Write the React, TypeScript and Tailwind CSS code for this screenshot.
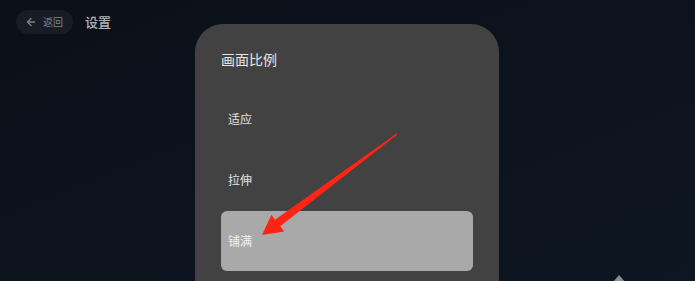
import React from "react";

const options = ["适应", "拉伸", "铺满"];

const App = () => {
  const selected = "铺满";

  return (
    <div
      className="relative w-[695px] h-[281px] overflow-hidden bg-gradient-to-br from-[#0b1018] to-[#0e1622]"
      style={{ fontFamily: '"Noto Sans CJK SC", "Noto Sans", sans-serif' }}
    >
      {/* top bar */}
      <div className="flex items-center gap-3 pl-4 pt-[10px]">
        <button className="flex items-center gap-[6px] h-6 w-[57px] pl-[9px] rounded-full bg-[#171c25] text-[#7d828a]">
          <svg width="12" height="12" viewBox="0 0 24 24" fill="none" stroke="currentColor" strokeWidth="2.6" strokeLinecap="round" strokeLinejoin="round">
            <path d="M19 12H5" />
            <path d="M12 19l-7-7 7-7" />
          </svg>
          <span className="text-[10px] leading-none">返回</span>
        </button>
        <span className="text-[13px] font-medium text-[#b4b7bc]">设置</span>
      </div>

      {/* panel */}
      <div className="absolute left-[195px] top-[24px] w-[304px] h-[290px] rounded-[28px] bg-[#424242] pl-[26px] pt-[25px]">
        <h2 className="text-[14px] leading-[20px] text-[#e6e6e6]">画面比例</h2>
        <div className="mt-[20px] flex flex-col gap-[1px] w-[252px]">
          {options.map((o) => (
            <div
              key={o}
              className={
                o === selected
                  ? "h-[60px] flex items-center pl-[7px] rounded-[6px] bg-[#a9a9a9] text-[12px] text-[#f2f2f2]"
                  : "h-[60px] flex items-center pl-[7px] rounded-[6px] text-[12px] text-[#e2e2e2]"
              }
            >
              {o}
            </div>
          ))}
        </div>
      </div>

      {/* small cursor tip bottom right */}
      <svg className="absolute left-[612px] top-[274px]" width="14" height="8" viewBox="0 0 14 8">
        <path d="M7 1 L13 8 L1 8 Z" fill="#8a8d92" />
      </svg>

      {/* red annotation arrow */}
      <svg className="absolute left-0 top-0 pointer-events-none" width="695" height="281" viewBox="0 0 695 281">
        <polygon
          points="397.4,134.5 280.2,226.2 284.2,231.4 262,235 271.4,214.8 275.0,219.8 396.6,133.5"
          fill="#ff2414"
        />
      </svg>
    </div>
  );
};

export default App;
